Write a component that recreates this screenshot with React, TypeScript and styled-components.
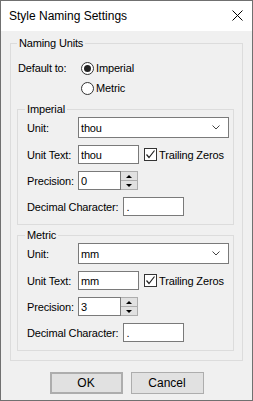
import styled, { createGlobalStyle } from "styled-components";

const GlobalStyle = createGlobalStyle`
  html, body {
    margin: 0;
    padding: 0;
  }
  body {
    font-family: "Liberation Sans", Arial, sans-serif;
    font-size: 11px;
    letter-spacing: -0.15px;
    color: #000;
  }
`;

const Window = styled.div`
  width: 253px;
  height: 401px;
  box-sizing: border-box;
  border: 1px solid #707070;
  display: flex;
  flex-direction: column;
  background: #f0f0f0;
`;

const TitleBar = styled.div`
  height: 30px;
  flex: none;
  background: #fff;
  display: flex;
  align-items: center;
  justify-content: space-between;
  padding: 0 9px 1px 8px;
  box-sizing: border-box;
  font-size: 12px;
  letter-spacing: 0;
`;

const CloseButton = styled.span`
  display: flex;
  width: 11px;
  height: 11px;
`;

const Body = styled.div`
  flex: 1;
  display: flex;
  flex-direction: column;
  padding: 5px 9px 0 9px;
`;

const Group = styled.fieldset<{ $inner?: boolean; $top?: number }>`
  margin: ${(p) => p.$top ?? 0}px 0 0 0;
  border: 1px solid #dcdcdc;
  min-width: 0;
  padding: ${(p) => (p.$inner ? "1px 4px 8px 9px" : "0 8px 9px 6px")};
  display: flex;
  flex-direction: column;
  gap: ${(p) => (p.$inner ? 7 : 0)}px;
`;

const Legend = styled.legend<{ $inner?: boolean }>`
  padding: 0 2px;
  margin-left: ${(p) => (p.$inner ? -2 : 0)}px;
  line-height: 14px;
`;

const DefaultRow = styled.div`
  display: flex;
  margin-top: 8px;
  margin-left: 1px;
`;

const Label = styled.span<{ $width?: number }>`
  width: ${(p) => (p.$width ? `${p.$width}px` : "auto")};
  flex: none;
  line-height: 20px;
  margin-right: ${(p) => (p.$width ? 0 : 5)}px;
  white-space: nowrap;
`;

const RadioList = styled.div`
  display: flex;
  flex-direction: column;
`;

const RadioOption = styled.label`
  display: flex;
  align-items: center;
  gap: 2px;
  height: 20px;
`;

const RadioCircle = styled.span<{ $checked?: boolean }>`
  width: 13px;
  height: 13px;
  box-sizing: border-box;
  border: 1px solid #333;
  border-radius: 50%;
  background: #fff;
  display: flex;
  align-items: center;
  justify-content: center;
  &::after {
    content: "";
    width: 7px;
    height: 7px;
    border-radius: 50%;
    background: ${(p) => (p.$checked ? "#222" : "transparent")};
  }
`;

const Row = styled.div`
  display: flex;
  align-items: center;
  height: 19px;
`;

const ComboRow = styled(Row)`
  height: 21px;
`;

const Combo = styled.div`
  flex: 1;
  height: 21px;
  box-sizing: border-box;
  border: 1px solid #7a7a7a;
  background: #fff;
  display: flex;
  align-items: center;
  justify-content: space-between;
  padding: 0 8px 0 2px;
`;

const TextInput = styled.input<{ $width: number }>`
  width: ${(p) => p.$width}px;
  height: 19px;
  box-sizing: border-box;
  border: 1px solid #7a7a7a;
  background: #fff;
  padding: 0 2px;
  margin: 0;
  font: inherit;
  letter-spacing: inherit;
  color: #000;
  outline: none;
`;

const CheckOption = styled.label`
  display: flex;
  align-items: center;
  gap: 2px;
  margin-left: 5px;
`;

const CheckBox = styled.span`
  width: 13px;
  height: 13px;
  box-sizing: border-box;
  border: 1px solid #333;
  background: #fff;
  display: flex;
  align-items: center;
  justify-content: center;
`;

const SpinBox = styled.div`
  display: flex;
  height: 19px;
`;

const Spinner = styled.div`
  width: 17px;
  height: 19px;
  box-sizing: border-box;
  border: 1px solid #adadad;
  border-left: none;
  display: flex;
  flex-direction: column;
  gap: 1px;
  background: #adadad;
`;

const SpinButton = styled.span`
  flex: 1;
  background: #e1e1e1;
  display: flex;
  align-items: center;
  justify-content: center;
`;

const Arrow = styled.span<{ $up?: boolean }>`
  width: 0;
  height: 0;
  border-left: 3px solid transparent;
  border-right: 3px solid transparent;
  ${(p) =>
    p.$up ? "border-bottom: 3px solid #000;" : "border-top: 3px solid #000;"}
`;

const ButtonRow = styled.div`
  display: flex;
  justify-content: center;
  gap: 8px;
  margin-top: 11px;
`;

const Button = styled.button<{ $default?: boolean }>`
  width: 73px;
  height: 22px;
  box-sizing: border-box;
  margin: 0;
  padding: 0;
  border: ${(p) => (p.$default ? 2 : 1)}px solid #adadad;
  background: #e1e1e1;
  font: inherit;
  font-size: 12px;
  color: #000;
`;

const Chevron = () => (
  <svg width="8" height="5" viewBox="0 0 8 5">
    <polyline points="0.5,0.5 4,4 7.5,0.5" fill="none" stroke="#444" strokeWidth="1" />
  </svg>
);

const Check = () => (
  <svg width="11" height="11" viewBox="0 0 11 11">
    <polyline points="1.5,5.5 4,8.5 9.5,1.5" fill="none" stroke="#222" strokeWidth="1.2" />
  </svg>
);

type UnitSettings = {
  title: string;
  unit: string;
  precision: string;
  top: number;
};

const UnitGroup = ({ title, unit, precision, top }: UnitSettings) => (
  <Group $inner $top={top}>
    <Legend $inner>{title}</Legend>
    <ComboRow>
      <Label $width={51}>Unit:</Label>
      <Combo>
        <span>{unit}</span>
        <Chevron />
      </Combo>
    </ComboRow>
    <Row>
      <Label $width={51}>Unit Text:</Label>
      <TextInput $width={61} defaultValue={unit} />
      <CheckOption>
        <CheckBox>
          <Check />
        </CheckBox>
        Trailing Zeros
      </CheckOption>
    </Row>
    <Row>
      <Label $width={51}>Precision:</Label>
      <SpinBox>
        <TextInput $width={43} defaultValue={precision} />
        <Spinner>
          <SpinButton>
            <Arrow $up />
          </SpinButton>
          <SpinButton>
            <Arrow />
          </SpinButton>
        </Spinner>
      </SpinBox>
    </Row>
    <Row>
      <Label>Decimal Character:</Label>
      <TextInput $width={61} defaultValue="." />
    </Row>
  </Group>
);

export default function App() {
  return (
    <>
      <GlobalStyle />
      <Window>
        <TitleBar>
          <span>Style Naming Settings</span>
          <CloseButton>
            <svg width="11" height="11" viewBox="0 0 11 11">
              <path d="M0.5 0.5 L10.5 10.5 M10.5 0.5 L0.5 10.5" stroke="#000" strokeWidth="1" />
            </svg>
          </CloseButton>
        </TitleBar>
        <Body>
          <Group>
            <Legend>Naming Units</Legend>
            <DefaultRow>
              <Label $width={63}>Default to:</Label>
              <RadioList>
                <RadioOption>
                  <RadioCircle $checked />
                  Imperial
                </RadioOption>
                <RadioOption>
                  <RadioCircle />
                  Metric
                </RadioOption>
              </RadioList>
            </DefaultRow>
            <UnitGroup title="Imperial" unit="thou" precision="0" top={4} />
            <UnitGroup title="Metric" unit="mm" precision="3" top={3} />
          </Group>
          <ButtonRow>
            <Button $default>OK</Button>
            <Button>Cancel</Button>
          </ButtonRow>
        </Body>
      </Window>
    </>
  );
}
